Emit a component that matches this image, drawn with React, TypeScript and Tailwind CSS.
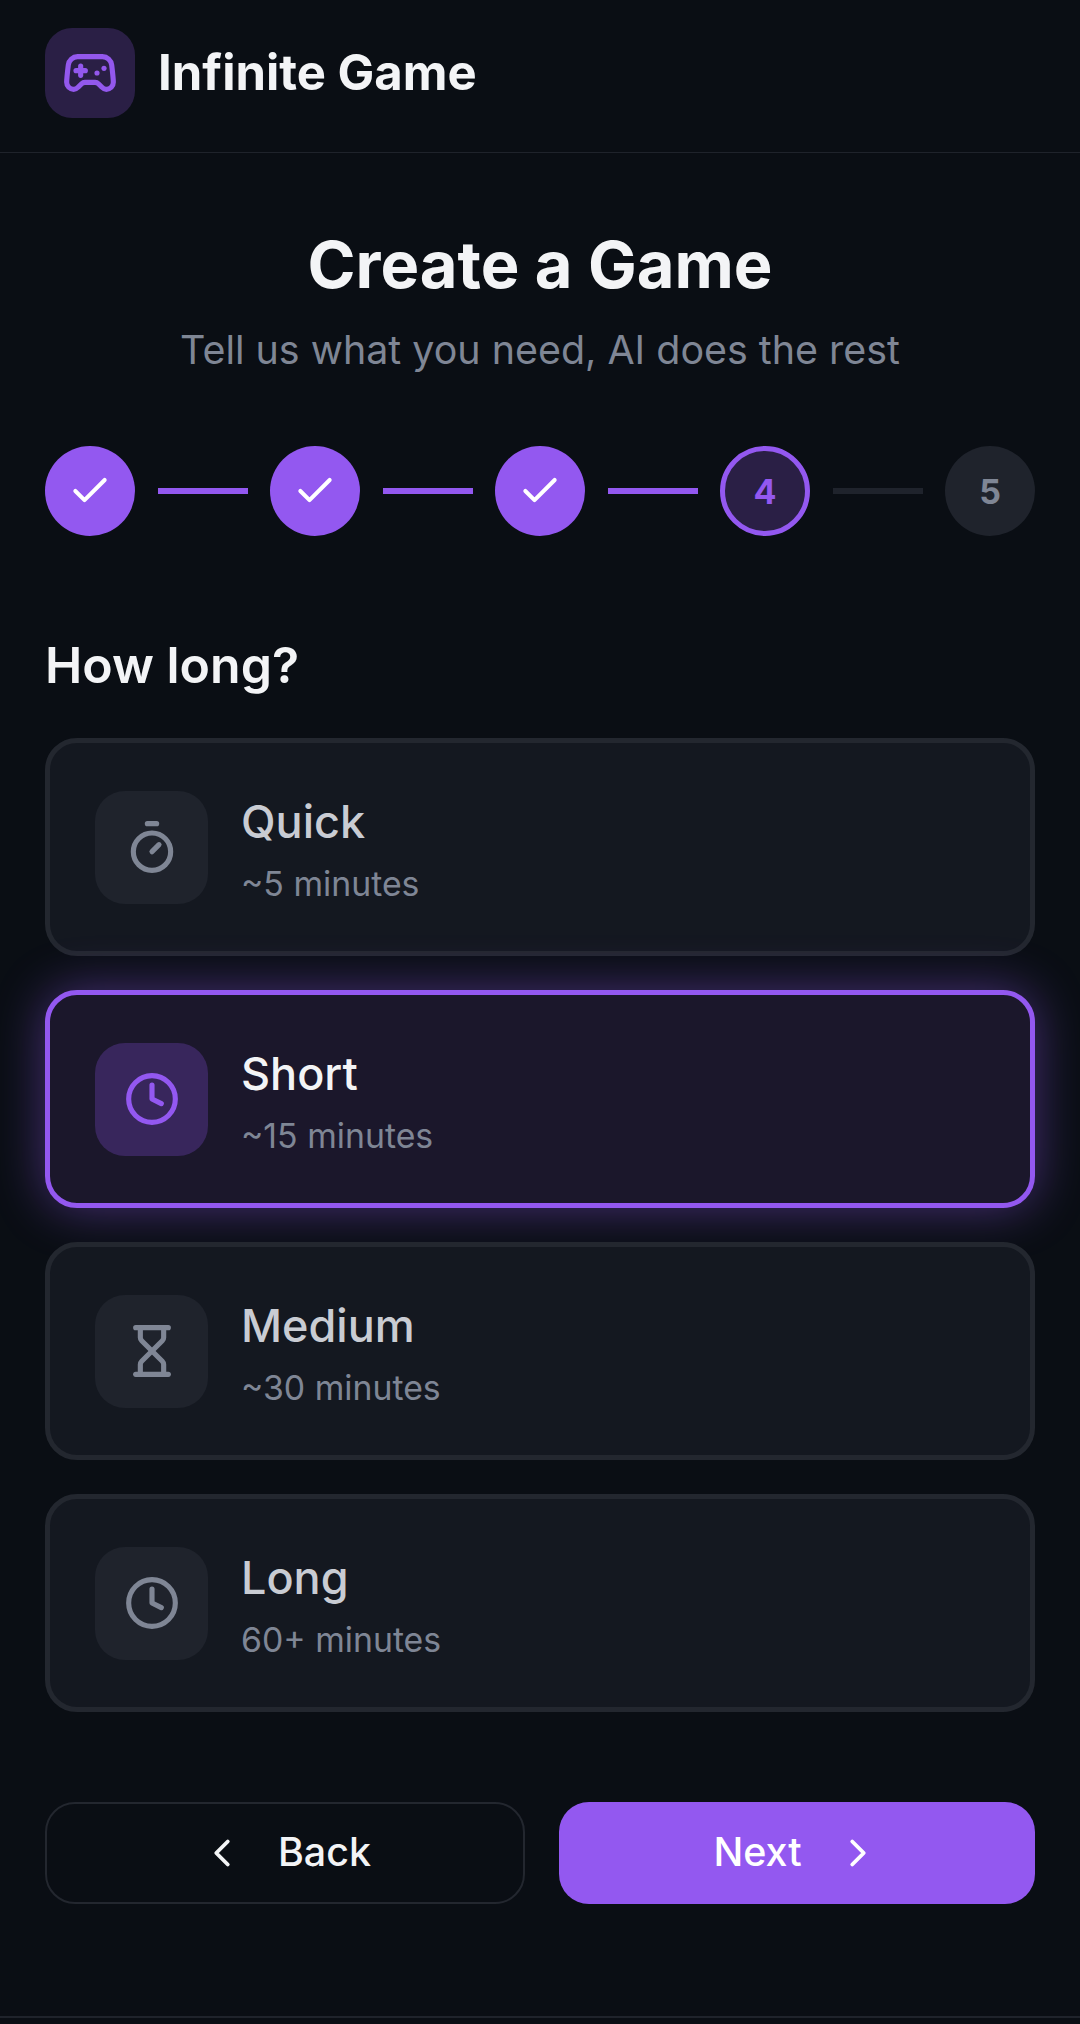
import React from 'react';
import {Check, ChevronLeft, ChevronRight, Clock, Gamepad2, Hourglass, Timer} from 'lucide-react';

const durations = [
  {id: 'quick', title: 'Quick', sub: '~5 minutes', Icon: Timer},
  {id: 'short', title: 'Short', sub: '~15 minutes', Icon: Clock},
  {id: 'medium', title: 'Medium', sub: '~30 minutes', Icon: Hourglass},
  {id: 'long', title: 'Long', sub: '60+ minutes', Icon: Clock},
];

const App: React.FC = () => {
  const selected = 'short';

  return (
    <div className="min-h-screen h-[2024px] overflow-hidden bg-[#0a0e14] text-[#f3f4f6] font-['Inter',sans-serif]">
      <header className="h-[153px] border-b border-[#1f232b] px-[45px] pt-[28px]">
        <div className="flex items-center gap-[23px]">
          <div className="w-[90px] h-[90px] rounded-[27px] bg-[#2a1f45] flex items-center justify-center">
            <Gamepad2 size={56} strokeWidth={2.2} className="text-[#9358ed]" />
          </div>
          <h1 className="text-[49px] leading-[56px] font-bold text-[#f3f4f6] mt-[-1px]">Infinite Game</h1>
        </div>
      </header>

      <main className="px-[45px]">
        <h2 className="mt-[74px] text-center text-[65px] leading-[76px] font-bold">Create a Game</h2>
        <p className="mt-[20px] text-center text-[39.4px] leading-[54px] text-[#7f8695]">
          Tell us what you need, AI does the rest
        </p>

        <div className="mt-[69px] flex items-center justify-between">
          {[1, 2, 3].map((n) => (
            <React.Fragment key={n}>
              <div className="w-[90px] h-[90px] rounded-full bg-[#9358f0] flex items-center justify-center">
                <Check size={44} strokeWidth={2.2} className="text-white" />
              </div>
              <div className="w-[90px] h-[6px] bg-[#9358f0]" />
            </React.Fragment>
          ))}
          <div className="w-[90px] h-[90px] rounded-full border-[5px] border-[#9358f0] bg-[#2a1f45] flex items-center justify-center text-[34px] font-bold text-[#9358f0]">
            4
          </div>
          <div className="w-[90px] h-[6px] bg-[#1f232c]" />
          <div className="w-[90px] h-[90px] rounded-full bg-[#1f232c] flex items-center justify-center text-[34px] font-bold text-[#7f8695]">
            5
          </div>
        </div>

        <h3 className="mt-[97px] text-[50px] leading-[64px] font-semibold">How long?</h3>

        <div className="mt-[41px] flex flex-col gap-[34px]">
          {durations.map(({id, title, sub, Icon}) => {
            const active = id === selected;
            return (
              <div
                key={id}
                className={
                  active
                    ? 'h-[218px] rounded-[32px] border-[5px] border-[#9358f0] bg-[#1b172b] shadow-[0_0_50px_rgba(147,88,240,0.45)] flex items-center pl-[45px] gap-[33px]'
                    : 'h-[218px] rounded-[32px] border-[5px] border-[#23272f] bg-[#141820] flex items-center pl-[45px] gap-[33px]'
                }>
                <div
                  className={
                    active
                      ? 'w-[113px] h-[113px] rounded-[30px] bg-[#38265c] flex items-center justify-center'
                      : 'w-[113px] h-[113px] rounded-[30px] bg-[#1f232c] flex items-center justify-center'
                  }>
                  <Icon size={56} strokeWidth={2.2} className={active ? 'text-[#9358f0]' : 'text-[#7f8695]'} />
                </div>
                <div className="pt-[7px]">
                  <div className={active ? 'text-[45px] leading-[60px] font-medium text-[#f3f4f6]' : 'text-[45px] leading-[60px] font-medium text-[#c9ccd3]'}>
                    {title}
                  </div>
                  <div className="mt-[6px] text-[33.8px] leading-[52px] text-[#7f8695]">{sub}</div>
                </div>
              </div>
            );
          })}
        </div>

        <div className="mt-[90px] flex gap-[34px]">
          <button className="flex-1 h-[102px] rounded-[30px] border-2 border-[#23272f] flex items-center justify-center gap-[33px] text-[39.4px] font-medium text-[#f3f4f6]">
            <ChevronLeft size={46} strokeWidth={2} />
            Back
          </button>
          <button className="flex-1 h-[102px] rounded-[30px] bg-[#9358f0] flex items-center justify-center gap-[33px] text-[39.4px] font-medium text-white">
            Next
            <ChevronRight size={46} strokeWidth={2} />
          </button>
        </div>
      </main>

      <div className="mt-[112px] border-t-2 border-[#1f232b]" />
    </div>
  );
};

export default App;
